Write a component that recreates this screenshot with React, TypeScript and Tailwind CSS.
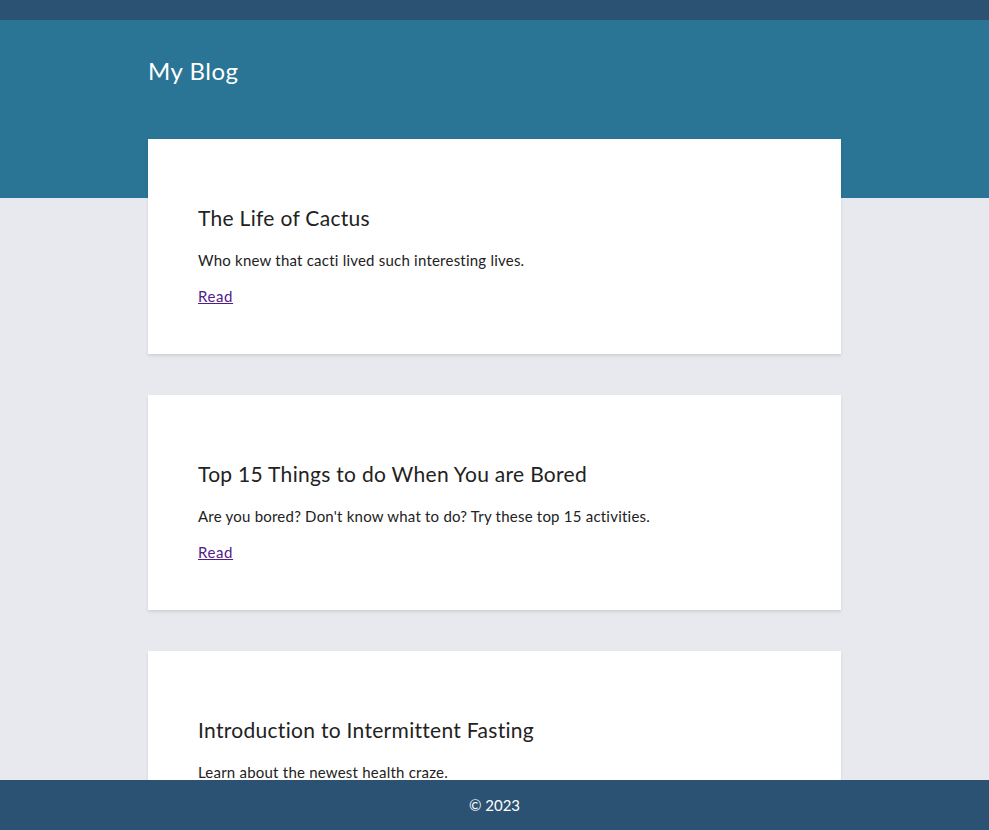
const posts = [
  { title: 'The Life of Cactus', summary: 'Who knew that cacti lived such interesting lives.' },
  { title: 'Top 15 Things to do When You are Bored', summary: "Are you bored? Don't know what to do? Try these top 15 activities." },
  { title: 'Introduction to Intermittent Fasting', summary: 'Learn about the newest health craze.' },
]

export default function App() {
  return (
    <div className="min-h-screen bg-[#e8e9ee] font-['Lato',sans-serif] text-[#222] pb-[90px]">
      <nav className="h-[20px] bg-[#2b5273]" />
      <header className="h-[178px] bg-[#2a7496]">
        <div className="mx-auto w-[693px] pt-[35px]">
          <h1 className="text-[24px] leading-[32px] tracking-[0.5px] text-white font-normal">My Blog</h1>
        </div>
      </header>

      <main className="mx-auto w-[693px] -mt-[59px] flex flex-col gap-[41px]">
        {posts.map((p) => (
          <article key={p.title} className="bg-white pt-[65px] pb-[46px] px-[50px] shadow-[0_2px_3px_rgba(0,0,0,0.1)]">
            <h2 className="text-[21px] leading-[28px] tracking-[0.3px] font-normal text-[#222]">{p.title}</h2>
            <p className="mt-[16px] text-[15px] leading-[24px] tracking-[0.22px] text-[#222]">{p.summary}</p>
            <a href="#" className="mt-[12px] block w-fit text-[15px] leading-[24px] tracking-[0.6px] text-[#551a8b] underline">
              Read
            </a>
          </article>
        ))}
      </main>

      <footer className="fixed bottom-0 left-0 right-0 h-[50px] bg-[#2b5273] flex items-center justify-center">
        <span className="text-[15px] text-white">© 2023</span>
      </footer>
    </div>
  )
}
